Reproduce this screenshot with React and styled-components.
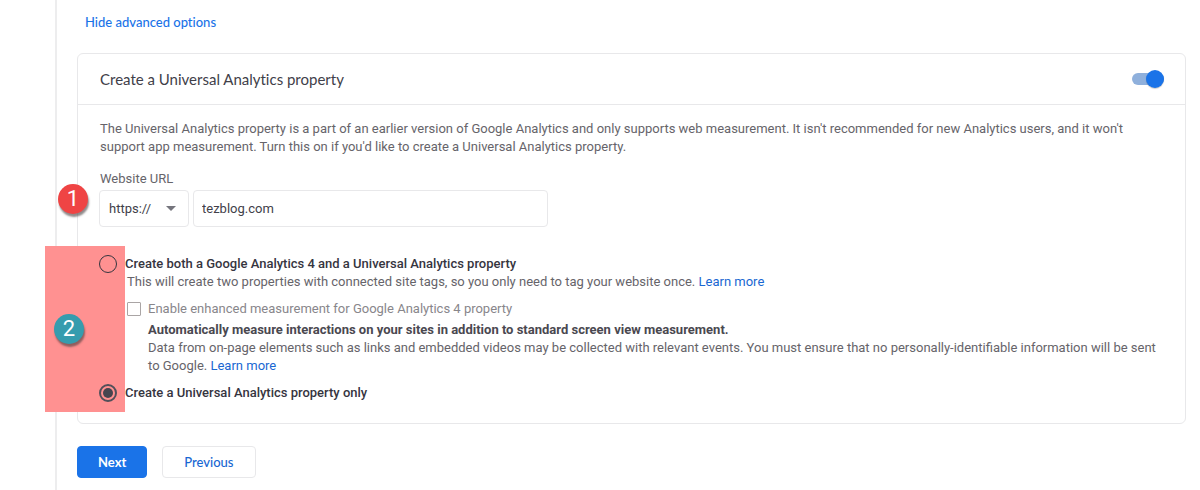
import { useState } from "react";
import styled, { createGlobalStyle } from "styled-components";

const GlobalStyle = createGlobalStyle`
* { box-sizing: border-box; }
body {
    margin: 0;
    background: #fff;
    color: #66646a;
    font: 13px/18px Roboto, sans-serif;
}
p { margin: 0; }
`

const App = () => {
    const [enabled, setEnabled] = useState(true);
    const [protocol, setProtocol] = useState("https://");
    const [url, setUrl] = useState("tezblog.com");
    const [enhanced, setEnhanced] = useState(false);
    const [type, setType] = useState("ua");

    return (
        <Page>
            <GlobalStyle />
            <Step>
                <ToggleLink href="#options">Hide advanced options</ToggleLink>

                <Card>
                    <CardHeader>
                        <CardTitle id="ua-title">Create a Universal Analytics property</CardTitle>
                        <Switch
                            type="checkbox"
                            role="switch"
                            aria-labelledby="ua-title"
                            checked={enabled}
                            onChange={(e) => setEnabled(e.target.checked)}
                        />
                    </CardHeader>

                    <CardBody>
                        <p>
                            The Universal Analytics property is a part of an earlier version of Google Analytics and only
                            supports web measurement. It isn't recommended for new Analytics users, and it won't support
                            app measurement. Turn this on if you'd like to create a Universal Analytics property.
                        </p>

                        <UrlField>
                            <label htmlFor="url">Website URL</label>
                            <UrlRow>
                                <SelectBox>
                                    <Select
                                        aria-label="Protocol"
                                        value={protocol}
                                        onChange={(e) => setProtocol(e.target.value)}
                                    >
                                        <option>https://</option>
                                        <option>http://</option>
                                    </Select>
                                    <Arrow viewBox="0 0 10 5"><path d="M0 0h10L5 5z" fill="#75757d" /></Arrow>
                                </SelectBox>
                                <UrlInput id="url" value={url} onChange={(e) => setUrl(e.target.value)} />
                            </UrlRow>
                            <Badge $color="#ef4444">1</Badge>
                        </UrlField>

                        <Options>
                            <Highlight />
                            <Badge $color="#359cae" $second>2</Badge>
                            <Option>
                                <Radio type="radio" name="type" checked={type === "both"} onChange={() => setType("both")} />
                                Create both a Google Analytics 4 and a Universal Analytics property
                            </Option>
                            <OptionDetails>
                                <p>
                                    This will create two properties with connected site tags, so you only need to tag your
                                    website once. <Link href="#tags">Learn more</Link>
                                </p>
                                <CheckLabel>
                                    <Checkbox type="checkbox" checked={enhanced} onChange={(e) => setEnhanced(e.target.checked)} />
                                    Enable enhanced measurement for Google Analytics 4 property
                                </CheckLabel>
                                <CheckHelp>
                                    <strong>
                                        Automatically measure interactions on your sites in addition to standard screen view
                                        measurement.
                                    </strong>
                                    <p>
                                        Data from on-page elements such as links and embedded videos may be collected with
                                        relevant events. You must ensure that no personally-identifiable information will be
                                        sent to Google. <Link href="#events">Learn more</Link>
                                    </p>
                                </CheckHelp>
                            </OptionDetails>
                            <Option>
                                <Radio type="radio" name="type" checked={type === "ua"} onChange={() => setType("ua")} />
                                Create a Universal Analytics property only
                            </Option>
                        </Options>
                    </CardBody>
                </Card>

                <Actions>
                    <Button type="button" $primary>Next</Button>
                    <Button type="button">Previous</Button>
                </Actions>
            </Step>
        </Page>
    );
}

export default App;

const Page = styled.main`
    padding-left: 55px;
`

const Step = styled.section`
    border-left: 2px solid #ededee;
    padding: 13px 14px 12px 20px;
`

const Link = styled.a`
    color: #1967d2;
    text-decoration: none;
`

const ToggleLink = styled(Link)`
    display: block;
    width: fit-content;
    margin-left: 8px;
    color: #1a73e8;
    font-family: Lato, sans-serif;
    font-weight: 500;
    font-variant-ligatures: none;
`

const Card = styled.div`
    margin-top: 22px;
    border: 1px solid #e8e8ea;
    border-radius: 6px;
`

const CardHeader = styled.div`
    display: flex;
    align-items: center;
    justify-content: space-between;
    height: 51px;
    padding: 0 21px 0 22px;
    border-bottom: 1px solid #e8e8ea;
`

const CardTitle = styled.h2`
    margin: 0;
    color: #414049;
    font: 400 15px/20px Lato, sans-serif;
    font-variant-ligatures: none;
`

const Switch = styled.input`
    appearance: none;
    display: flex;
    align-items: center;
    width: 32px;
    height: 12px;
    margin: 0;
    border-radius: 6px;
    background: ${(props) => (props.checked ? "#8fb0dc" : "#bdbdbd")};
    cursor: pointer;
    &::before {
        content: "";
        flex: none;
        width: 18px;
        height: 18px;
        margin-left: ${(props) => (props.checked ? "auto" : "0")};
        border-radius: 50%;
        background: ${(props) => (props.checked ? "#1a73e8" : "#fafafa")};
        box-shadow: 0 1px 1px rgba(0, 0, 0, 0.2);
    }
`

const CardBody = styled.div`
    padding: 15px 21px 21px;
    > p { padding-left: 1px; }
`

const UrlField = styled.div`
    position: relative;
    margin-top: 14px;
    label { padding-left: 1px; }
`

const UrlRow = styled.div`
    display: flex;
    gap: 4px;
    margin-top: 2px;
`

const SelectBox = styled.div`
    position: relative;
    width: 90px;
`

const Select = styled.select`
    appearance: none;
    width: 100%;
    height: 37px;
    padding: 0 9px;
    border: 1px solid #e8e8ea;
    border-radius: 4px;
    background: #fff;
    color: #414049;
    font: inherit;
`

const Arrow = styled.svg`
    position: absolute;
    top: 16px;
    right: 13px;
    width: 10px;
    height: 5px;
    pointer-events: none;
`

const UrlInput = styled.input`
    width: 355px;
    height: 37px;
    padding: 0 8px;
    border: 1px solid #e8e8ea;
    border-radius: 4px;
    color: #414049;
    font: inherit;
`

// numbered step marker that hangs over the left edge of the card
const Badge = styled.span`
    position: absolute;
    top: ${(props) => (props.$second ? "59px" : "14px")};
    left: ${(props) => (props.$second ? "-45px" : "-41px")};
    width: 30px;
    height: 30px;
    border-radius: 50%;
    background: ${(props) => props.$color};
    box-shadow: 1px 3px 2px rgba(70, 60, 60, 0.6);
    color: #fff;
    font: 22px/30px Roboto, sans-serif;
    text-align: center;
`

const Options = styled.div`
    position: relative;
    margin-top: 28px;
`

const Highlight = styled.div`
    position: absolute;
    top: -9px;
    bottom: -10px;
    left: -54px;
    width: 80px;
    background: #ff9191;
`

const Option = styled.label`
    position: relative;
    display: flex;
    align-items: center;
    gap: 8px;
    color: #36353f;
    font-weight: 500;
`

const Radio = styled.input`
    appearance: none;
    display: grid;
    place-items: center;
    width: 18px;
    height: 18px;
    margin: 0;
    border: 1px solid #36353f;
    border-radius: 50%;
    &:checked { border: 2px solid #52505a; }
    &:checked::before {
        content: "";
        width: 10px;
        height: 10px;
        border-radius: 50%;
        background: #46454f;
    }
`

const OptionDetails = styled.div`
    padding: 0 0 9px 28px;
`

const CheckLabel = styled.label`
    display: flex;
    align-items: center;
    gap: 7px;
    margin-top: 9px;
    color: #88868b;
`

const Checkbox = styled.input`
    appearance: none;
    width: 14px;
    height: 14px;
    margin: 0;
    border: 1px solid #aaa5a5;
    border-radius: 1px;
    &:checked { background: #1a73e8; }
`

const CheckHelp = styled.div`
    margin-top: 3px;
    padding-left: 21px;
    strong {
        display: block;
        color: #4a4850;
        font-weight: 700;
    }
`

const Actions = styled.div`
    display: flex;
    gap: 15px;
    margin-top: 22px;
`

const Button = styled.button`
    height: 32px;
    padding: 0 ${(props) => (props.$primary ? "20px" : "21px")};
    border: 1px solid ${(props) => (props.$primary ? "#1a73e8" : "#e8e8ea")};
    border-radius: 4px;
    background: ${(props) => (props.$primary ? "#1a73e8" : "#fff")};
    color: ${(props) => (props.$primary ? "#fff" : "#1967d2")};
    font: ${(props) => (props.$primary ? 700 : 500)} 13px/18px Lato, sans-serif;
    cursor: pointer;
`
